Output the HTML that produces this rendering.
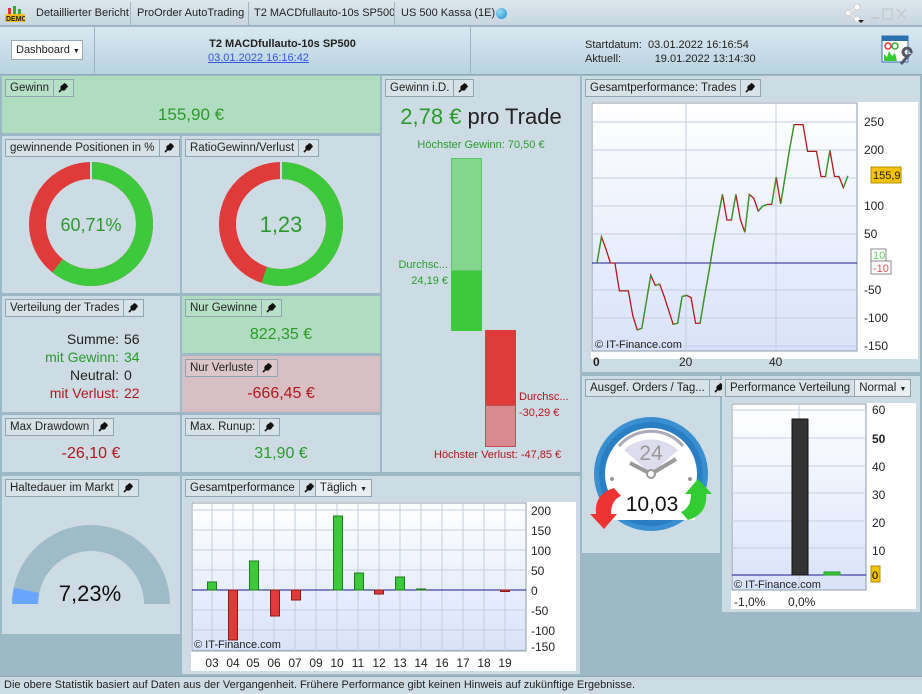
<!DOCTYPE html>
<html><head><meta charset="utf-8">
<style>
*{box-sizing:border-box;margin:0;padding:0}
body{width:922px;height:694px;overflow:hidden;background:#9db8c6;font-family:"Liberation Sans",sans-serif;font-size:12px;color:#222;position:relative}
.a{position:absolute}
.p{position:absolute;background:#cddce4}
.h{position:absolute;left:3px;top:3px;height:18px;border:1px solid #8fa5b2;background:#d6e2e8;font-size:11.5px;line-height:16px;padding:0 4px;white-space:nowrap;display:flex}
.h span.w{border-left:1px solid #8fa5b2;margin-left:4px;padding-left:4px;width:16px;display:flex;align-items:center}
.c{position:absolute;left:0;right:0;text-align:center}
.g{color:#2b9a2b}.r{color:#b3161c}
.t{position:absolute;top:7px;font-size:11px;white-space:nowrap}
svg text{font-family:"Liberation Sans",sans-serif}
</style></head><body>
<svg width="0" height="0" style="position:absolute"><defs><symbol id="wr" viewBox="0 0 10 10"><path d="M1 9L5.5 4.5M5 2.5a2.2 2.2 0 1 0 2.5 2.5L9 3.5 8 2 6.5 1z" stroke="#111" stroke-width="1.6" fill="#111"/></symbol></defs></svg>
<!-- title bar -->
<div class="a" style="left:0;top:0;width:922px;height:26px;background:linear-gradient(#dde7ee,#c7d6e0);border-bottom:1px solid #9fb4c2"></div>
<div class="a" style="left:5px;top:6px;width:20px;height:16px">
<svg width="20" height="16"><rect x="3" y="2" width="3" height="6" fill="#d33"/><rect x="8" y="0" width="3" height="8" fill="#3a3"/><rect x="13" y="3" width="3" height="5" fill="#3a3"/><rect x="0" y="8" width="20" height="8" fill="#e8c020"/><text x="1" y="15" font-size="7" font-weight="bold" fill="#222">DEMO</text></svg></div>
<div class="t" style="left:36px">Detaillierter Bericht</div>
<div class="a" style="left:130px;top:2px;width:1px;height:23px;background:#9fb4c2"></div>
<div class="t" style="left:137px">ProOrder AutoTrading</div>
<div class="a" style="left:248px;top:2px;width:1px;height:23px;background:#9fb4c2"></div>
<div class="t" style="left:254px">T2 MACDfullauto-10s SP500</div>
<div class="a" style="left:394px;top:2px;width:1px;height:23px;background:#9fb4c2"></div>
<div class="t" style="left:401px">US 500 Kassa (1E)</div>
<div class="a" style="left:496px;top:8px;width:11px;height:11px;border-radius:50%;background:radial-gradient(circle at 35% 35%,#9de,#1a8ad8)"></div>
<svg class="a" style="left:843px;top:4px" width="80" height="20"><g fill="#fff" stroke="#ccc"><circle cx="5" cy="9" r="3"/><circle cx="14" cy="3" r="3"/><circle cx="14" cy="15" r="3"/></g><path d="M5 9L14 3M5 9L14 15" stroke="#eee"/><path d="M15 16h6l-3 3z" fill="#222"/><path d="M28 14h8" stroke="#c4ccd2" stroke-width="2"/><rect x="40" y="5" width="9" height="10" fill="none" stroke="#c4ccd2" stroke-width="1.5"/><path d="M54 5l9 10M63 5l-9 10" stroke="#c4ccd2" stroke-width="1.6"/></svg>
<!-- header row -->
<div class="a" style="left:0;top:27px;width:922px;height:48px;background:linear-gradient(#d8e8f0,#b9d3e0);border-bottom:1px solid #8faab8"></div>
<div class="a" style="left:94px;top:27px;width:1px;height:48px;background:#9fb4c2"></div>
<div class="a" style="left:470px;top:27px;width:1px;height:48px;background:#9fb4c2"></div>
<div class="a" style="left:11px;top:40px;width:72px;height:20px;background:#fff;border:1px solid #9aaab4;font-size:11px;line-height:18px;padding-left:4px;white-space:nowrap">Dashboard <span style="font-size:7px">▼</span></div>
<div class="a" style="left:95px;top:38px;width:375px;text-align:center;font-weight:bold;font-size:11px">T2 MACDfullauto-10s SP500</div>
<div class="a" style="left:208px;top:52px;font-size:11px;color:#3355dd;text-decoration:underline">03.01.2022 16:16:42</div>
<div class="a" style="left:585px;top:38px;font-size:11px;line-height:14px;white-space:nowrap">Startdatum:&nbsp; 03.01.2022 16:16:54<br>Aktuell:&nbsp;&nbsp;&nbsp;&nbsp;&nbsp;&nbsp;&nbsp;&nbsp;&nbsp;&nbsp; 19.01.2022 13:14:30</div>
<svg class="a" style="left:881px;top:34px" width="32" height="32"><rect x="1" y="2" width="26" height="26" fill="#fff" stroke="#2a6fb0"/><rect x="1" y="2" width="26" height="5" fill="#2a6fb0"/><circle cx="7" cy="12" r="3" fill="none" stroke="#e33" stroke-width="1.5"/><circle cx="14" cy="12" r="3" fill="none" stroke="#3a3" stroke-width="1.5"/><path d="M3 27V20l3 3 2-6 3 5 3-3 2 8z" fill="#3c3"/><path d="M20 30l7-8a4 4 0 1 1 3-3" stroke="#556" stroke-width="3" fill="none"/></svg>

<!-- panels -->
<div class="p" style="left:2px;top:76px;width:378px;height:57px;background:#b0dcc0"><div class="h" style="background:#b8e0c6">Gewinn<span class="w"><svg width="10" height="10"><use href="#wr"/></svg></span></div><div class="c g" style="top:29px;font-size:17px">155,90 €</div></div>

<div class="p" style="left:2px;top:136px;width:178px;height:157px"><div class="h">gewinnende Positionen in %<span class="w"><svg width="10" height="10"><use href="#wr"/></svg></span></div>
<svg class="a" style="left:0;top:0" width="178" height="157"><circle cx="89" cy="88" r="53.5" fill="none" stroke="#e03a3a" stroke-width="17"/><circle cx="89" cy="88" r="53.5" fill="none" stroke="#3cc93c" stroke-width="17" stroke-dasharray="204.1 400" transform="rotate(-90 89 88)"/><line x1="89" y1="26" x2="89" y2="45" stroke="#cddce4" stroke-width="2"/><text x="89" y="95" text-anchor="middle" font-size="18" fill="#2b9a2b">60,71%</text></svg></div>

<div class="p" style="left:182px;top:136px;width:198px;height:157px"><div class="h">RatioGewinn/Verlust<span class="w"><svg width="10" height="10"><use href="#wr"/></svg></span></div>
<svg class="a" style="left:0;top:0" width="198" height="157"><circle cx="99" cy="88" r="53.5" fill="none" stroke="#e03a3a" stroke-width="17"/><circle cx="99" cy="88" r="53.5" fill="none" stroke="#3cc93c" stroke-width="17" stroke-dasharray="185 400" transform="rotate(-90 99 88)"/><line x1="99" y1="26" x2="99" y2="45" stroke="#cddce4" stroke-width="2"/><text x="99" y="96" text-anchor="middle" font-size="22" fill="#2b9a2b">1,23</text></svg></div>

<div class="p" style="left:2px;top:296px;width:178px;height:116px"><div class="h">Verteilung der Trades<span class="w"><svg width="10" height="10"><use href="#wr"/></svg></span></div>
<div class="a" style="left:0;width:117px;top:34px;text-align:right;font-size:14px;line-height:18px">Summe:<br><span class="g">mit Gewinn:</span><br>Neutral:<br><span class="r">mit Verlust:</span></div>
<div class="a" style="left:122px;top:34px;font-size:14px;line-height:18px">56<br><span class="g">34</span><br>0<br><span class="r">22</span></div></div>

<div class="p" style="left:182px;top:296px;width:198px;height:57px;background:#b0dcc0"><div class="h" style="background:#b8e0c6">Nur Gewinne<span class="w"><svg width="10" height="10"><use href="#wr"/></svg></span></div><div class="c g" style="top:30px;font-size:16px">822,35 €</div></div>
<div class="p" style="left:182px;top:356px;width:198px;height:56px;background:#d7bfc3"><div class="h" style="background:#dcc6ca">Nur Verluste<span class="w"><svg width="10" height="10"><use href="#wr"/></svg></span></div><div class="c r" style="top:29px;font-size:16px">-666,45 €</div></div>

<div class="p" style="left:2px;top:415px;width:178px;height:57px"><div class="h">Max Drawdown<span class="w"><svg width="10" height="10"><use href="#wr"/></svg></span></div><div class="c r" style="top:30px;font-size:16px">-26,10 €</div></div>
<div class="p" style="left:182px;top:415px;width:198px;height:57px"><div class="h">Max. Runup:<span class="w"><svg width="10" height="10"><use href="#wr"/></svg></span></div><div class="c g" style="top:30px;font-size:16px">31,90 €</div></div>

<!-- Gewinn i.D. -->
<div class="p" style="left:382px;top:76px;width:198px;height:396px"><div class="h">Gewinn i.D.<span class="w"><svg width="10" height="10"><use href="#wr"/></svg></span></div>
<div class="c" style="top:28px;font-size:22px"><span class="g">2,78 €</span> pro Trade</div>
<div class="c g" style="top:63px;font-size:11px">Höchster Gewinn: 70,50 €</div>
<div class="a" style="left:69px;top:82px;width:31px;height:113px;background:#84d68e;border:1px solid #5cc46a"></div>
<div class="a" style="left:69px;top:195px;width:31px;height:60px;background:#3cc93c"></div>
<div class="a g" style="left:0;width:66px;top:181px;text-align:right;font-size:11px;line-height:16px">Durchsc...<br>24,19 €</div>
<div class="a" style="left:103px;top:254px;width:31px;height:75px;background:#e03a3a"></div>
<div class="a" style="left:103px;top:329px;width:31px;height:42px;background:#d98a8e;border:1px solid #c05058"></div>
<div class="a r" style="left:137px;top:313px;font-size:11px;line-height:16px">Durchsc...<br>-30,29 €</div>
<div class="a r" style="left:52px;top:373px;font-size:11px">Höchster Verlust: -47,85 €</div></div>

<!-- Trades chart -->
<div class="p" style="left:582px;top:76px;width:338px;height:296px"><div class="h">Gesamtperformance: Trades<span class="w"><svg width="10" height="10"><use href="#wr"/></svg></span></div></div>
<svg class="a" style="left:582px;top:76px" width="338" height="296">
<defs><linearGradient id="bg1" x1="0" y1="0" x2="0" y2="1"><stop offset="0" stop-color="#fff"/><stop offset="1" stop-color="#d8e2fa"/></linearGradient></defs>
<rect x="9" y="26" width="327" height="257" fill="#fff"/>
<rect x="10" y="27" width="265" height="248" fill="url(#bg1)" stroke="#8a9aa8"/>
<g stroke="#c4cedc"><path d="M10 46H275M10 74H275M10 102H275M10 130H275M10 158H275M10 214H275M10 242H275M10 270H275"/><path d="M104 27V275M194 27V275"/></g>
<line x1="10" y1="187" x2="275" y2="187" stroke="#1a1a8c"/>
<g transform="translate(15,187) scale(4.48,-0.558)" fill="none">
<path vector-effect="non-scaling-stroke" stroke="#b3161c" stroke-width="1.3" d="M0 0L1 47L2 25L3 0L4 0L5 -50L6 -50L7 -50L8 -95L9 -120L10 -117L11 -70L12 -22L13 -40L14 -38L15 -60L16 -85L17 -110L18 -108L19 -60L20 -58L21 -62L22 -108L23 -108L24 -60L25 -15L26 35L27 80L28 123L29 77L30 77L31 123L32 78L33 55L34 123L35 116L36 93L37 102L38 105L39 105L40 154L41 106L42 155L43 205L44 248L45 248L46 248L47 200L48 200L49 200L50 155L51 155L52 202L53 155L54 155L55 135L56 156"/>
<path vector-effect="non-scaling-stroke" stroke="#2aa02a" stroke-width="1.3" d="M0 0L1 47M9 -120L10 -117L11 -70L12 -22M13 -40L14 -38M17 -110L18 -108L19 -60L20 -58M23 -108L24 -60L25 -15L26 35L27 80L28 123M30 77L31 123M33 55L34 123M36 93L37 102L38 105M39 105L40 154M41 106L42 155L43 205L44 248M51 155L52 202M55 135L56 156"/></g>
<g font-size="12" fill="#222"><text x="282" y="50">250</text><text x="282" y="78">200</text><text x="282" y="134">100</text><text x="282" y="162">50</text><text x="282" y="218">-50</text><text x="282" y="246">-100</text><text x="282" y="274">-150</text>
<text x="11" y="290" font-weight="bold">0</text><text x="97" y="290">20</text><text x="187" y="290">40</text><text x="13" y="272" font-size="11">© IT-Finance.com</text></g>
<rect x="289" y="173" width="15" height="13" fill="#fff" stroke="#888"/><text x="291" y="183" font-size="11" fill="#6c6">10</text>
<rect x="289" y="185" width="20" height="13" fill="#fff" stroke="#888"/><text x="291" y="196" font-size="11" fill="#d55">-10</text>
<rect x="289" y="91" width="30" height="16" fill="#f2c200" stroke="#b09000"/><text x="291" y="103" font-size="11" fill="#222">155,9</text>
</svg>

<!-- Ausgef Orders -->
<div class="p" style="left:582px;top:376px;width:138px;height:177px"><div class="h">Ausgef. Orders / Tag...<span class="w"><svg width="10" height="10"><use href="#wr"/></svg></span></div>
<svg class="a" style="left:0;top:0" width="138" height="177"><circle cx="69" cy="98" r="57" fill="#3a8fd0"/><circle cx="69" cy="98" r="52" fill="#2a7ec4"/><circle cx="69" cy="98" r="46" fill="#fff"/><path d="M37 70a42 42 0 0 1 64 0" stroke="#aab" stroke-width="3" fill="none"/><path d="M42 74l27 24 27-24a40 40 0 0 0-54 0z" fill="#dde"/><text x="69" y="84" text-anchor="middle" font-size="21" fill="#999">24</text><path d="M69 98L48 87M69 98L94 83" stroke="#999" stroke-width="4"/><circle cx="69" cy="98" r="4" fill="#fff" stroke="#999" stroke-width="2"/><circle cx="30" cy="103" r="2" fill="#999"/><circle cx="108" cy="103" r="2" fill="#999"/><rect x="27" y="111" width="86" height="33" fill="#fff"/><path d="M32 112q-20 6-18 26h-6l14 15 13-15h-6q0-14 10-18z" fill="#e33"/><path d="M106 144q20-6 18-26h6l-14-15-13 15h6q0 14-10 18z" fill="#3c3"/><text x="70" y="135" text-anchor="middle" font-size="21" fill="#111">10,03</text></svg></div>

<!-- Performance Verteilung -->
<div class="p" style="left:722px;top:376px;width:198px;height:236px"><div class="h" style="padding-right:0">Performance Verteilung<span style="border-left:1px solid #8fa5b2;margin-left:4px;padding:0 4px;background:#e8eef2">Normal <span style="font-size:7px">▼</span></span></div></div>
<svg class="a" style="left:722px;top:376px" width="198" height="236">
<rect x="9" y="27" width="185" height="206" fill="#fff"/>
<rect x="10" y="28" width="134" height="186" fill="url(#bg1)" stroke="#8a9aa8"/>
<g stroke="#c4cedc"><path d="M10 34H144M10 62H144M10 90H144M10 117H144M10 145H144M10 172H144M77 28V214"/></g>
<line x1="10" y1="199" x2="144" y2="199" stroke="#1a1a8c"/>
<rect x="70" y="43" width="16" height="156" fill="#333" stroke="#111"/>
<rect x="102" y="196" width="16" height="3" fill="#3c3" stroke="#292"/>
<g font-size="12" fill="#222"><text x="150" y="38">60</text><text x="150" y="67" font-weight="bold">50</text><text x="150" y="95">40</text><text x="150" y="123">30</text><text x="150" y="151">20</text><text x="150" y="179">10</text><text x="12" y="230">-1,0%</text><text x="66" y="230">0,0%</text><text x="12" y="212" font-size="11">© IT-Finance.com</text></g>
<rect x="149" y="190" width="9" height="16" fill="#f2c200" stroke="#b09000"/><text x="150" y="203" font-size="11">0</text>
</svg>

<!-- Haltedauer -->
<div class="p" style="left:2px;top:476px;width:178px;height:158px"><div class="h">Haltedauer im Markt<span class="w"><svg width="10" height="10"><use href="#wr"/></svg></span></div>
<svg class="a" style="left:0;top:0" width="178" height="158"><path d="M10 128A79 79 0 0 1 168 128H142A53 53 0 0 0 36 128z" fill="#9fbac8"/><path d="M10 128A79 79 0 0 1 11.8 111.6L37.2 117A53 53 0 0 0 36 128z" fill="#6aa6ff"/><text x="88" y="125" text-anchor="middle" font-size="22" fill="#111">7,23%</text></svg></div>

<!-- Gesamtperformance daily -->
<div class="p" style="left:182px;top:476px;width:398px;height:198px"><div class="h" style="padding-right:0">Gesamtperformance<span class="w"><svg width="10" height="10"><use href="#wr"/></svg></span><span style="border-left:1px solid #8fa5b2;padding:0 4px;background:#e8eef2">Täglich <span style="font-size:7px">▼</span></span></div></div>
<svg class="a" style="left:182px;top:476px" width="398" height="198">
<rect x="9" y="26" width="385" height="169" fill="#fff"/>
<rect x="10" y="27" width="334" height="148" fill="url(#bg1)" stroke="#8a9aa8"/>
<g stroke="#c4cedc"><path d="M10 34H344M10 54H344M10 74H344M10 94H344M10 134H344M10 154H344M10 174H344"/>
<path d="M30 27V175M51 27V175M71 27V175M92 27V175M113 27V175M134 27V175M155 27V175M176 27V175M197 27V175M218 27V175M239 27V175M260 27V175M281 27V175M302 27V175M323 27V175"/></g>
<line x1="10" y1="114" x2="344" y2="114" stroke="#1a1a8c"/>
<g stroke-width="1"><rect x="25.5" y="106" width="9" height="8" fill="#3cc93c" stroke="#1d7a1d"/>
<rect x="46.5" y="114" width="9" height="50" fill="#e03a3a" stroke="#8a1a1a"/>
<rect x="67.5" y="85" width="9" height="29" fill="#3cc93c" stroke="#1d7a1d"/>
<rect x="88.5" y="114" width="9" height="26" fill="#e03a3a" stroke="#8a1a1a"/>
<rect x="109.5" y="114" width="9" height="10" fill="#e03a3a" stroke="#8a1a1a"/>
<rect x="151.5" y="40" width="9" height="74" fill="#3cc93c" stroke="#1d7a1d"/>
<rect x="172.5" y="97" width="9" height="17" fill="#3cc93c" stroke="#1d7a1d"/>
<rect x="192.5" y="114" width="9" height="4" fill="#e03a3a" stroke="#8a1a1a"/>
<rect x="213.5" y="101" width="9" height="13" fill="#3cc93c" stroke="#1d7a1d"/>
<rect x="234.5" y="113" width="9" height="1" fill="#3cc93c" stroke="#1d7a1d"/>
<rect x="318.5" y="114" width="9" height="1.5" fill="#e03a3a" stroke="#8a1a1a"/></g>
<g font-size="12" fill="#222"><text x="349" y="39">200</text><text x="349" y="59">150</text><text x="349" y="79">100</text><text x="349" y="99">50</text><text x="349" y="119">0</text><text x="349" y="139">-50</text><text x="349" y="159">-100</text><text x="349" y="175">-150</text>
<g text-anchor="middle"><text x="30" y="191">03</text><text x="51" y="191">04</text><text x="71" y="191">05</text><text x="92" y="191">06</text><text x="113" y="191">07</text><text x="134" y="191">09</text><text x="155" y="191">10</text><text x="176" y="191">11</text><text x="197" y="191">12</text><text x="218" y="191">13</text><text x="239" y="191">14</text><text x="260" y="191">16</text><text x="281" y="191">17</text><text x="302" y="191">18</text><text x="323" y="191">19</text></g>
<text x="12" y="172" font-size="11">© IT-Finance.com</text></g>
</svg>

<!-- footer -->
<div class="a" style="left:0;top:676px;width:922px;height:18px;background:#cddce4;border-top:1px solid #8faab8;font-size:11px;line-height:17px;padding-left:4px;white-space:nowrap">Die obere Statistik basiert auf Daten aus der Vergangenheit. Frühere Performance gibt keinen Hinweis auf zukünftige Ergebnisse.</div>
</body></html>
